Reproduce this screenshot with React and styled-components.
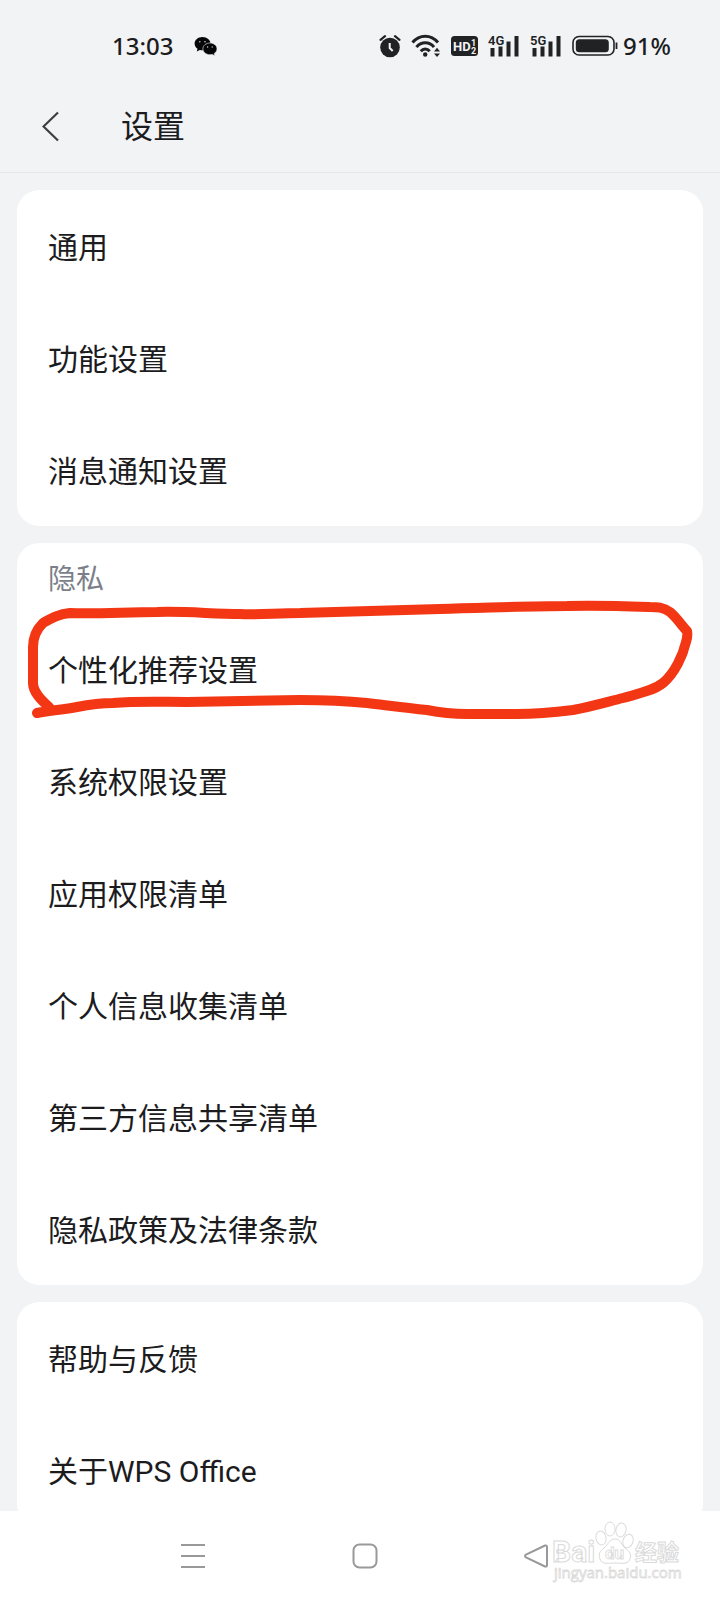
import React from "react";
import styled, { createGlobalStyle } from "styled-components";

const generalItems = ["通用", "功能设置", "消息通知设置"];

const privacyItems = [
  "个性化推荐设置",
  "系统权限设置",
  "应用权限清单",
  "个人信息收集清单",
  "第三方信息共享清单",
  "隐私政策及法律条款",
];

const aboutItems = ["帮助与反馈", "关于WPS Office"];

const ClockIcon = () => (
  <svg width="22" height="24" viewBox="0 0 22 24" aria-hidden="true">
    <circle cx="11" cy="13.500" r="9.800" fill="#202224" />
    <path d="M1.500 5.800 6 2.200M20.500 5.800 16 2.200" stroke="#202224" strokeWidth="2.200" strokeLinecap="round" />
    <path d="M10.700 9v5l3 3" stroke="#f2f3f5" strokeWidth="2" fill="none" />
  </svg>
);

const WifiIcon = () => (
  <svg width="30" height="24" viewBox="0 0 30 24" aria-hidden="true">
    <g fill="none" stroke="#202224" strokeWidth="3">
      <path d="M1.500 8.500C8.500 0 20 0 27 8.500" />
      <path d="M5.500 13.200c4.500-5.800 13-5.800 17.500 0" />
      <path d="M9.800 17.200c2.500-3 6.400-3 8.900 0" />
    </g>
    <circle cx="14.200" cy="20.500" r="2.200" fill="#202224" />
    <path d="M23 17.400 26 13.800l3 3.600zM23 19.400h6L26 23z" fill="#202224" />
  </svg>
);

const HdIcon = () => (
  <svg width="27" height="20" viewBox="0 0 27 20" aria-hidden="true">
    <rect width="27" height="20" rx="3.500" fill="#202224" />
    <g fill="#f2f3f5" fontFamily="Roboto, sans-serif" fontWeight="700">
      <text x="2" y="15" fontSize="13">HD</text>
      <text x="20" y="9.500" fontSize="9">1</text>
      <text x="20" y="17.500" fontSize="9">2</text>
    </g>
  </svg>
);

const SignalIcon = ({ label }) => (
  <svg width="32" height="24" viewBox="0 0 32 24" aria-hidden="true">
    <text x="0" y="10.500" fontSize="13" fontWeight="600" fontFamily="Roboto, sans-serif" fill="#202224">
      {label}
    </text>
    <path d="M2.500 14h4v8.500h-4zM10.500 12.500h4v10h-4zM18.500 7.500h4v15h-4zM26.500 2h4v20.500h-4z" fill="#202224" />
  </svg>
);

const BatteryIcon = () => (
  <svg width="46" height="22" viewBox="0 0 46 22" aria-hidden="true">
    <rect x="1" y="1.500" width="41" height="18.500" rx="6" fill="none" stroke="#202224" strokeWidth="1.600" />
    <rect x="3.800" y="4.200" width="33" height="13" rx="3.500" fill="#202224" />
    <path d="M44.500 7.500v6.500" stroke="#202224" strokeWidth="1.800" />
  </svg>
);

const ChatIcon = () => (
  <svg width="24" height="20" viewBox="0 0 24 20" aria-hidden="true">
    <path d="M8.500 1C4 1 .6 3.900.6 7.600c0 2.200 1.100 4 2.900 5.200L2.800 15.400l3-1.500c.9.200 1.800.3 2.700.3 4.500 0 8-3 8-6.600S13 1 8.500 1z" fill="#060606" />
    <path d="M16 7c-4 0-7.100 2.600-7.100 5.900 0 3.200 3.100 5.800 7.100 5.800.8 0 1.500-.1 2.300-.3l2.700 1.300-.7-2.300c1.700-1.100 2.700-2.700 2.700-4.500C23 9.600 19.900 7 16 7z" fill="#060606" stroke="#f2f3f5" strokeWidth=".6" />
    <g fill="#c9cacc">
      <circle cx="5.800" cy="5.800" r=".8" />
      <circle cx="11" cy="5.800" r=".8" />
      <circle cx="13.600" cy="11" r=".7" />
      <circle cx="18.200" cy="11" r=".7" />
    </g>
  </svg>
);

const Watermark = () => (
  <WatermarkArt viewBox="0 0 134 66" aria-hidden="true">
    <g fill="#fff" stroke="#dadada" strokeWidth="1">
      <ellipse cx="51" cy="18" rx="5" ry="7" transform="rotate(-12 51 18)" />
      <ellipse cx="60" cy="9" rx="5" ry="7" />
      <ellipse cx="71" cy="10" rx="5" ry="7" transform="rotate(12 71 10)" />
      <ellipse cx="78" cy="21" rx="5" ry="7" transform="rotate(20 78 21)" />
      <path d="M65 19c-6 0-7 6-11 9s-6 6-4 11c2 6 9 4 15 4s13 2 15-4c2-5-1-8-5-11s-4-9-10-9z" />
      <g fontFamily='Roboto, "Noto Sans CJK SC", sans-serif' fontWeight="700">
        <text x="2" y="42" fontSize="30">Bai</text>
        <text x="55" y="39" fontSize="17" strokeWidth=".8">du</text>
        <text x="85" y="40" fontSize="22">经验</text>
      </g>
      <text x="4" y="58" fontSize="15" fontFamily='"Open Sans", sans-serif' fontWeight="400" strokeWidth=".8">
        jingyan.baidu.com
      </text>
    </g>
  </WatermarkArt>
);

const Marker = () => (
  <MarkerArt viewBox="0 0 686 130" preserveAspectRatio="none" aria-hidden="true">
    <path
      d="M20 118C35 115 46 115 60 112C75 109 84 108 96 108C120 106 145 107 170 107L283 105C310 105 330 106 350 108C375 111 390 113 410 115C425 118 438 119 450 119L500 119C522 119 540 117 556 115C573 112 590 107 606 103C620 99 636 96 646 88C658 78 666 60 669 47Q671 41 670 36C665 31 661 24 653 17C646 12 640 12 633 12C605 11 578 10 550 11C510 11 470 13 423 14L283 18C260 18 240 20 223 19C195 19 170 16 140 17C110 17 80 19 53 18C42 19 35 23 26 28C19 35 16 43 16 52L16 88C16 97 24 105 32 112"
      fill="none"
      stroke="#f33613"
      strokeWidth="10"
      strokeLinecap="round"
      strokeLinejoin="round"
    />
  </MarkerArt>
);

const Section = ({ title, items, marked }) => (
  <Card>
    {title && <CardTitle>{title}</CardTitle>}
    {items.map((item) => (
      <Row key={item} type="button">
        {item}
        {item === marked && <Marker />}
      </Row>
    ))}
  </Card>
);

const App = () => {
  return (
    <Screen>
      <GlobalStyle />
      <StatusBar>
        <StatusText>13:03</StatusText>
        <ChatIcon />
        <StatusIcons>
          <ClockIcon />
          <WifiIcon />
          <HdIcon />
          <SignalIcon label="4G" />
          <SignalIcon label="5G" />
          <BatteryLevel>
            <BatteryIcon />
            <StatusText>91%</StatusText>
          </BatteryLevel>
        </StatusIcons>
      </StatusBar>

      <Header>
        <BackButton type="button" aria-label="返回">
          <svg width="18" height="32" viewBox="0 0 18 32">
            <path d="M16 2.500 1.500 16.500l14.500 14" fill="none" stroke="#3c3e42" strokeWidth="2.200" />
          </svg>
        </BackButton>
        <Title>设置</Title>
      </Header>

      <Content>
        <Section items={generalItems} />
        <Section title="隐私" items={privacyItems} marked="个性化推荐设置" />
        <Section items={aboutItems} />
      </Content>

      <NavBar>
        <NavButton type="button" aria-label="菜单">
          <svg width="26" height="26" viewBox="0 0 26 26">
            <path d="M1 2h24M1 13h24M1 24h24" stroke="#999" strokeWidth="2" />
          </svg>
        </NavButton>
        <NavButton type="button" aria-label="主页">
          <svg width="26" height="26" viewBox="0 0 26 26">
            <rect x="1.500" y="1.500" width="23" height="23" rx="6" fill="none" stroke="#999" strokeWidth="2" />
          </svg>
        </NavButton>
        <NavButton type="button" aria-label="后退">
          <svg width="26" height="26" viewBox="0 0 26 26">
            <path d="M22 2.500 3 11.600q-2 1.400 0 2.800L22 23.500q2 .5 2-1.500V4q0-2-2-1.500z" fill="none" stroke="#999" strokeWidth="2" strokeLinejoin="round" />
          </svg>
        </NavButton>
        <Watermark />
      </NavBar>
    </Screen>
  );
};

export default App;

const GlobalStyle = createGlobalStyle`
  * {
    box-sizing: border-box;
  }

  body {
    margin: 0;
    background: #f2f3f5;
    font-family: Roboto, "Noto Sans CJK SC", sans-serif;
    color: #1c1c1e;
  }

  button {
    border: 0;
    padding: 0;
    background: none;
    font: inherit;
    color: inherit;
  }

  svg {
    display: block;
    flex-shrink: 0;
  }
`;

const Screen = styled.div`
  display: flex;
  flex-direction: column;
  height: 100vh;
`;

const StatusBar = styled.div`
  display: flex;
  align-items: center;
  gap: 21px;
  height: 92px;
  padding: 0 49px 0 112px;
  flex-shrink: 0;
`;

const StatusText = styled.span`
  font-family: "Noto Sans", sans-serif;
  font-size: 24px;
  font-weight: 500;
  line-height: 32px;
`;

const StatusIcons = styled.div`
  display: flex;
  align-items: center;
  gap: 10px;
  margin-left: auto;
`;

const BatteryLevel = styled.div`
  display: flex;
  align-items: center;
  gap: 5px;
`;

const Header = styled.header`
  display: flex;
  align-items: center;
  gap: 61px;
  height: 81px;
  padding: 2px 42px 14px;
  border-bottom: 1px solid #e6e7e9;
  flex-shrink: 0;
`;

const BackButton = styled.button`
  cursor: pointer;
`;

const Title = styled.h1`
  margin: 0;
  padding-top: 2px;
  font-size: 32px;
  font-weight: 400;
  line-height: 44px;
`;

const Content = styled.main`
  display: flex;
  flex-direction: column;
  gap: 17px;
  flex: 1;
  min-height: 0;
  padding: 17px 17px 0;
  overflow-y: auto;
  scrollbar-width: none;
`;

const Card = styled.section`
  flex-shrink: 0;
  border-radius: 22px;
  background: #fff;
`;

const CardTitle = styled.h2`
  margin: 0;
  padding: 17px 31px 13px;
  font-size: 28px;
  font-weight: 400;
  line-height: 40px;
  color: #7b7f89;
`;

const Row = styled.button`
  position: relative;
  display: flex;
  align-items: center;
  width: 100%;
  height: 112px;
  padding: 4px 31px 0;
  font-size: 30px;
  line-height: 44px;
  text-align: left;
  cursor: pointer;
`;

const MarkerArt = styled.svg`
  position: absolute;
  top: -18px;
  left: 0;
  width: 100%;
  height: 130px;
  pointer-events: none;
`;

const NavBar = styled.nav`
  position: relative;
  display: flex;
  align-items: center;
  justify-content: space-between;
  height: 89px;
  padding: 0 171px 0 180px;
  background: #fff;
  flex-shrink: 0;
`;

const NavButton = styled.button`
  cursor: pointer;
`;

const WatermarkArt = styled.svg`
  position: absolute;
  right: 36px;
  bottom: 14px;
  width: 134px;
  height: 66px;
  pointer-events: none;
`;
